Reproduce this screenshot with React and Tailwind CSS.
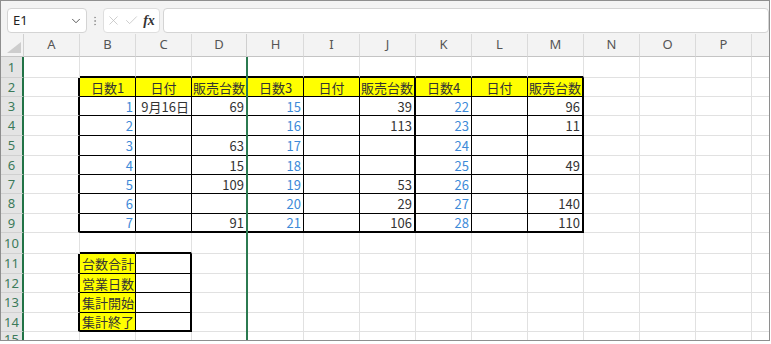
import { ChevronDown, Check, X, EllipsisVertical } from "lucide-react";

// 列幅（行番号列は別）。E〜G は非表示なので緑の区切り線だけ置く
const COLS = [
  { key: "A", w: "w-[56px]" },
  { key: "B", w: "w-[56px]" },
  { key: "C", w: "w-[56px]" },
  { key: "D", w: "w-[54px]" },
  { key: "|", w: "w-[2px]" },
  { key: "H", w: "w-[56px]" },
  { key: "I", w: "w-[56px]" },
  { key: "J", w: "w-[56px]" },
  { key: "K", w: "w-[56px]" },
  { key: "L", w: "w-[56px]" },
  { key: "M", w: "w-[56px]" },
  { key: "N", w: "w-[56px]" },
  { key: "O", w: "w-[56px]" },
  { key: "P", w: "w-[56px]" },
  { key: "Q", w: "flex-1" },
];

const ROW_H = [
  "h-[21px]", "h-[19px]", "h-[19px]", "h-[20px]", "h-[20px]",
  "h-[19px]", "h-[19px]", "h-[20px]", "h-[19px]", "h-[21px]",
  "h-[20px]", "h-[19px]", "h-[20px]", "h-[19px]", "flex-1",
];

const DATA = {
  2: {
    B: ["日数1", "head"], C: ["日付", "head"], D: ["販売台数", "head"],
    H: ["日数3", "head"], I: ["日付", "head"], J: ["販売台数", "head"],
    K: ["日数4", "head"], L: ["日付", "head"], M: ["販売台数", "head"],
  },
  3: { B: ["1", "blue"], C: ["9月16日", "num"], D: ["69", "num"], H: ["15", "blue"], J: ["39", "num"], K: ["22", "blue"], M: ["96", "num"] },
  4: { B: ["2", "blue"], H: ["16", "blue"], J: ["113", "num"], K: ["23", "blue"], M: ["11", "num"] },
  5: { B: ["3", "blue"], D: ["63", "num"], H: ["17", "blue"], K: ["24", "blue"] },
  6: { B: ["4", "blue"], D: ["15", "num"], H: ["18", "blue"], K: ["25", "blue"], M: ["49", "num"] },
  7: { B: ["5", "blue"], D: ["109", "num"], H: ["19", "blue"], J: ["53", "num"], K: ["26", "blue"] },
  8: { B: ["6", "blue"], H: ["20", "blue"], J: ["29", "num"], K: ["27", "blue"], M: ["140", "num"] },
  9: { B: ["7", "blue"], D: ["91", "num"], H: ["21", "blue"], J: ["106", "num"], K: ["28", "blue"], M: ["110", "num"] },
  11: { B: ["台数合計", "label"] },
  12: { B: ["営業日数", "label"] },
  13: { B: ["集計開始", "label"] },
  14: { B: ["集計終了", "label"] },
};

const MAIN = ["B", "C", "D", "H", "I", "J", "K", "L", "M"];

const TYPE_CLS = {
  head: "justify-center bg-[#ffff00] text-[#333]",
  blue: "justify-end pr-[2px] text-[#3d8ad8]",
  num: "justify-end pr-[2px] text-[#333]",
  label: "justify-start pl-[2px] bg-[#ffff00] text-[#333]",
};

function rightCls(r, c) {
  if (c === "D" || c === "Q") return "";
  if (r >= 2 && r <= 9) {
    if (c === "A" || c === "J" || c === "M") return "border-r-2 border-r-black";
    if (MAIN.includes(c)) return "border-r border-r-black";
  }
  if (r >= 11 && r <= 14) {
    if (c === "A" || c === "C") return "border-r-2 border-r-black";
    if (c === "B") return "border-r border-r-black";
  }
  return "border-r border-r-[#e1e1e1]";
}

function bottomCls(r, c) {
  const main = MAIN.includes(c);
  if (main && (r === 1 || r === 9)) return "border-b-2 border-b-black";
  if (main && r >= 2 && r <= 8) return "border-b border-b-black";
  const sub = c === "B" || c === "C";
  if (sub && (r === 10 || r === 14)) return "border-b-2 border-b-black";
  if (sub && r >= 11 && r <= 13) return "border-b border-b-black";
  return "border-b border-b-[#e1e1e1]";
}

function Toolbar() {
  return (
    <div className="h-[33px] shrink-0 bg-[#f3f3f3] flex items-start pt-[7px] pl-[6px]">
      <div className="w-[80px] h-[25px] bg-white border border-[#d4d4d4] rounded-[4px] flex items-center justify-between pl-[5px] pr-[3px]">
        <span className="text-[13px] text-[#222] font-['Noto_Sans',sans-serif]">E1</span>
        <ChevronDown size={14} strokeWidth={1.5} className="text-[#444]" />
      </div>
      <div className="w-[16px] h-[25px] flex items-center justify-center">
        <EllipsisVertical size={12} className="text-[#9a9a9a]" />
      </div>
      <div className="w-[57px] h-[25px] bg-white border border-[#dedede] rounded-[4px] flex items-center">
        <div className="w-[18px] flex justify-center">
          <X size={15} strokeWidth={1.2} className="text-[#bdbdbd]" />
        </div>
        <div className="w-[18px] flex justify-center">
          <Check size={15} strokeWidth={1.2} className="text-[#bdbdbd]" />
        </div>
        <div className="w-[18px] flex justify-center text-[14px] italic font-bold text-[#333] font-['Liberation_Serif',serif]">
          fx
        </div>
      </div>
      <div className="ml-[3px] flex-1 h-[25px] bg-white border border-[#d4d4d4] rounded-[4px]" />
    </div>
  );
}

function HeaderRow() {
  return (
    <div className="flex h-[23px] shrink-0 bg-[#f3f3f3]">
      <div className="w-[23px] shrink-0 border-r border-r-[#d0d0d0] border-b border-b-[#c4c4c4] flex items-end justify-end pr-[2px] pb-[3px]">
        <svg width="14" height="11" viewBox="0 0 14 11">
          <polygon points="14,0 14,11 0,11" fill="#cdcdcd" />
        </svg>
      </div>
      {COLS.map((col) =>
        col.key === "|" ? (
          <div key="sep" className={`${col.w} shrink-0 border-l border-l-[#cfcfcf] border-b border-b-[#c4c4c4]`} />
        ) : (
          <div
            key={col.key}
            className={`${col.w} shrink-0 flex items-center justify-center border-b border-b-[#c4c4c4] text-[13px] text-[#555] font-['Noto_Sans',sans-serif] ${
              col.key === "D" || col.key === "Q" ? "" : "border-r border-r-[#dadada]"
            }`}
          >
            {col.key === "Q" ? "" : col.key}
          </div>
        )
      )}
    </div>
  );
}

function SheetRow({ r }) {
  const row = DATA[r] || {};
  // 15行目は下端で切れているので、数字を上寄せにして上半分だけ見せる
  const last = r === 15;
  return (
    <div className={`flex shrink-0 ${ROW_H[r - 1]} overflow-hidden`}>
      <div
        className={`w-[23px] shrink-0 flex justify-center overflow-hidden leading-none bg-[#e4e4e4] border-r-2 border-r-[#217346] text-[13px] text-[#3b7a5a] font-['Noto_Sans',sans-serif] ${
          last ? "items-start pt-[1px]" : "items-center border-b border-b-[#d0d0d0]"
        }`}
      >
        {r}
      </div>
      {COLS.map((col) => {
        if (col.key === "|") {
          return <div key="sep" className={`${col.w} shrink-0 bg-[#2b7a50]`} />;
        }
        const cell = row[col.key];
        const type = cell ? TYPE_CLS[cell[1]] : "";
        return (
          <div
            key={col.key}
            className={`${col.w} shrink-0 flex items-center leading-none whitespace-nowrap text-[13px] font-['Noto_Sans_CJK_JP',sans-serif] ${rightCls(r, col.key)} ${last ? "" : bottomCls(r, col.key)} ${type}`}
          >
            {cell ? cell[0] : ""}
          </div>
        );
      })}
    </div>
  );
}

export default function App() {
  const rows = Array.from({ length: 15 }, (_, i) => i + 1);
  return (
    <div className="w-[771px] h-[344px] bg-white">
      <div className="w-[770px] h-[341px] border border-[#8e8e8e] flex flex-col overflow-hidden bg-white">
        <Toolbar />
        <HeaderRow />
        {rows.map((r) => (
          <SheetRow key={r} r={r} />
        ))}
      </div>
    </div>
  );
}
